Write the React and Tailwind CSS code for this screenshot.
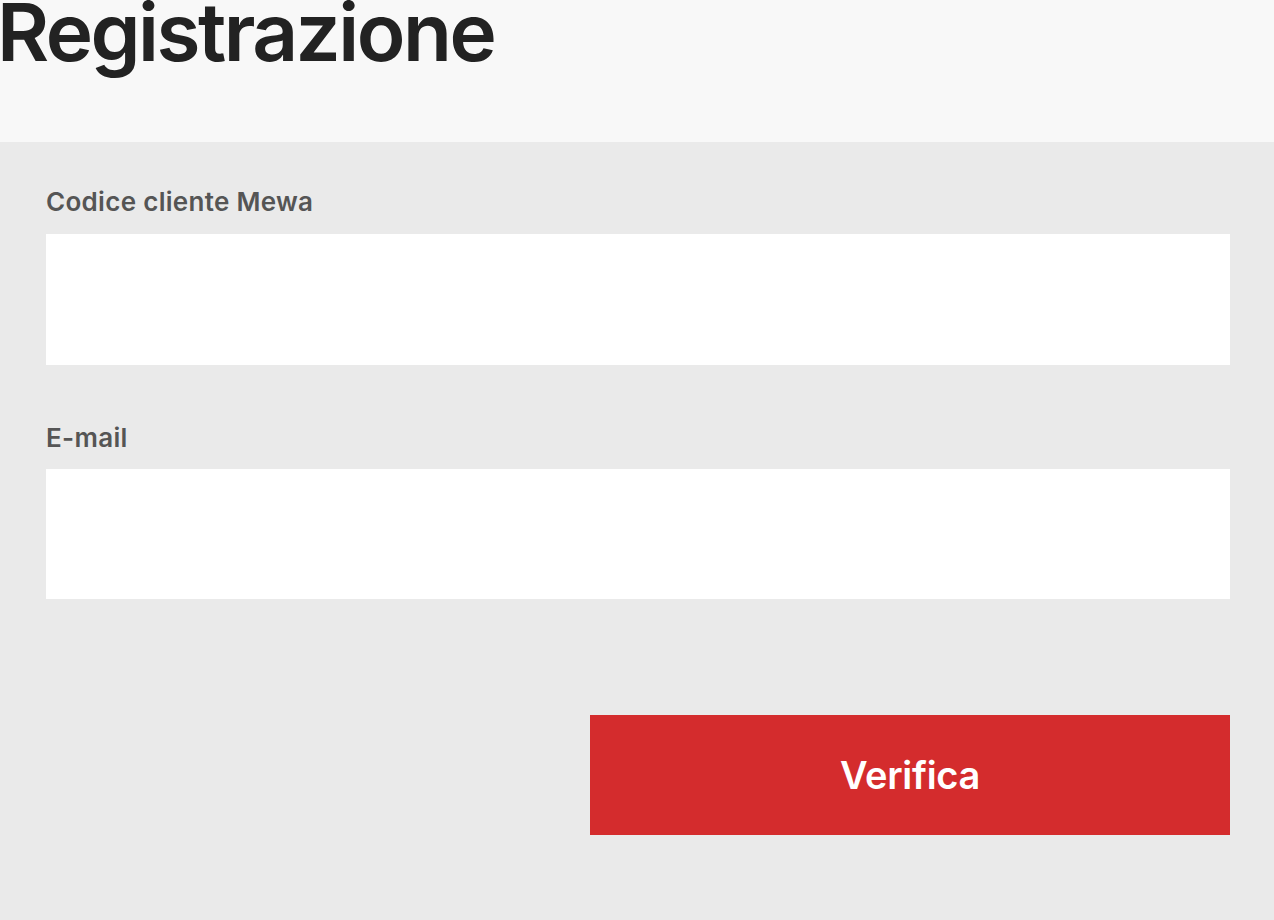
export default function App() {
  return (
    <div className="min-h-[920px] w-full bg-[#eaeaea]" style={{ fontFamily: "Inter, 'Noto Sans', sans-serif" }}>
      <div className="h-[142px] bg-[#f8f8f8] overflow-hidden">
        <h1 className="text-[80px] leading-[80px] font-semibold text-[#222] tracking-[-2.5px] mt-[-8px] ml-[-3px]">Registrazione</h1>
      </div>
      <div className="pl-[46px] pr-[44px] pt-[44px] flex flex-col">
        <label className="text-[26px] leading-[32px] font-semibold text-[#555] tracking-[0.3px]">Codice cliente Mewa</label>
        <input className="mt-[16px] h-[131px] bg-white w-full outline-none" />
        <label className="mt-[57px] text-[26px] leading-[32px] font-semibold text-[#555] tracking-[0.3px]">E-mail</label>
        <input className="mt-[15px] h-[130px] bg-white w-full outline-none" />
        <div className="flex justify-end mt-[116px]">
          <button className="w-[640px] h-[120px] bg-[#d42c2d] text-white text-[38px] font-semibold tracking-[-0.3px]">Verifica</button>
        </div>
      </div>
    </div>
  );
}
